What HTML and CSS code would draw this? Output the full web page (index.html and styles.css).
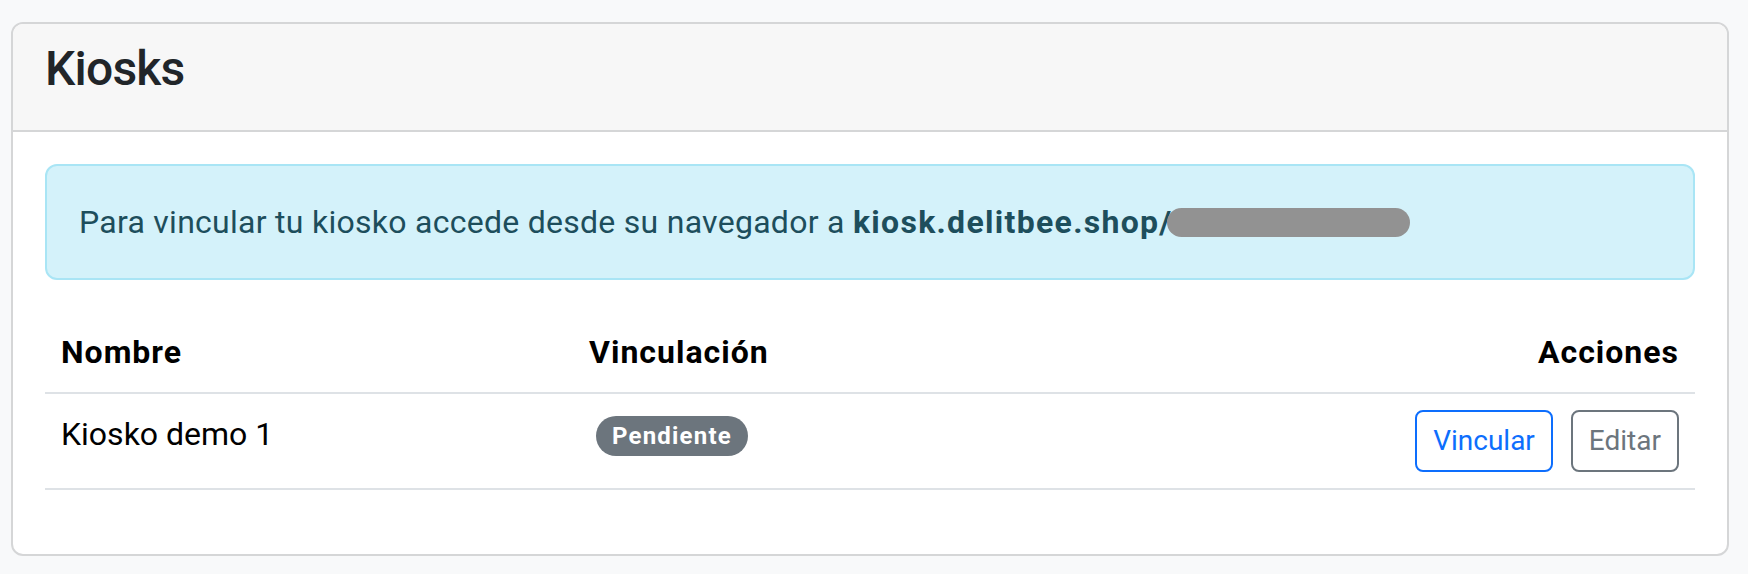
FILE: index.html
```html
<!DOCTYPE html>
<html lang="es">
<head>
<meta charset="utf-8">
<title>Kiosks</title>
<link rel="stylesheet" href="styles.css">
</head>
<body>
<div class="page">
  <div class="card">
    <div class="card-header">
      <h4 class="card-title">Kiosks</h4>
    </div>
    <div class="card-body">
      <div class="alert">Para vincular tu kiosko accede desde su navegador a <strong>kiosk.delitbee.shop/</strong><span class="redacted" aria-hidden="true"></span></div>
      <table class="table">
        <thead>
          <tr>
            <th class="col-name">Nombre</th>
            <th class="col-link">Vinculación</th>
            <th class="col-actions text-end">Acciones</th>
          </tr>
        </thead>
        <tbody>
          <tr>
            <td>Kiosko demo 1</td>
            <td><span class="badge">Pendiente</span></td>
            <td class="text-end">
              <div class="actions">
                <button class="btn btn-outline-primary" type="button">Vincular</button>
                <button class="btn btn-outline-secondary" type="button">Editar</button>
              </div>
            </td>
          </tr>
        </tbody>
      </table>
    </div>
  </div>
</div>
</body>
</html>
```
FILE: styles.css
```css
* { box-sizing: border-box; }

html, body {
  margin: 0;
  background: #f8f9fa;
}

body {
  font-family: Roboto, "Liberation Sans", Arial, sans-serif;
  font-size: 32px;
  line-height: 1.5;
  color: #212529;
}

.page {
  padding: 22px 19px 20px 11px;
}

.card {
  background: #fff;
  border: 2px solid #d5d6d7;
  border-radius: 12px;
  overflow: hidden;
}

.card-header {
  background: #f7f7f7;
  border-bottom: 2px solid #d5d6d7;
  padding: 16px 32px;
}

.card-title {
  margin: 0 0 16px;
  font-size: 48px;
  font-weight: 500;
  line-height: 1.2;
  letter-spacing: -0.8px;
  color: #212529;
}

.card-body {
  padding: 32px;
}

.alert {
  background: #d4f2fa;
  border: 2px solid #a9e5f5;
  border-radius: 12px;
  color: #1d4e5c;
  padding: 32px;
  margin-bottom: 32px;
  line-height: 48px;
  letter-spacing: 0.27px;
}

.alert strong {
  font-weight: 700;
  letter-spacing: 1.3px;
}

.redacted {
  display: inline-block;
  width: 243px;
  height: 29px;
  margin-left: -6px;
  border-radius: 15px;
  background: #929292;
  vertical-align: -4px;
  filter: blur(0.6px);
}

.table {
  width: 100%;
  border-collapse: collapse;
  table-layout: fixed;
  color: #000;
  margin-bottom: 32px;
}

.table th,
.table td {
  padding: 16px;
  border-bottom: 2px solid #dee2e6;
  text-align: left;
  vertical-align: top;
  line-height: 48px;
}

.table th {
  font-weight: 700;
  letter-spacing: 1px;
}

.col-name { width: 528px; }
.col-actions { width: 340px; }

.table .text-end { text-align: right; }

.badge {
  display: inline-block;
  background: #6c757d;
  color: #fff;
  font-size: 24px;
  font-weight: 700;
  line-height: 1;
  padding: 8px 16px;
  letter-spacing: 1.2px;
  border-radius: 40px;
  margin-left: 7px;
  vertical-align: 1px;
}

.actions {
  display: flex;
  justify-content: flex-end;
  gap: 18px;
}

.btn {
  font-family: inherit;
  font-size: 28px;
  line-height: 42px;
  padding: 8px 16px;
  background: #fff;
  border: 2px solid;
  border-radius: 8px;
  cursor: pointer;
}

.btn-outline-primary {
  color: #0d6efd;
  border-color: #0d6efd;
}

.btn-outline-secondary {
  color: #6c757d;
  border-color: #6c757d;
}
```
